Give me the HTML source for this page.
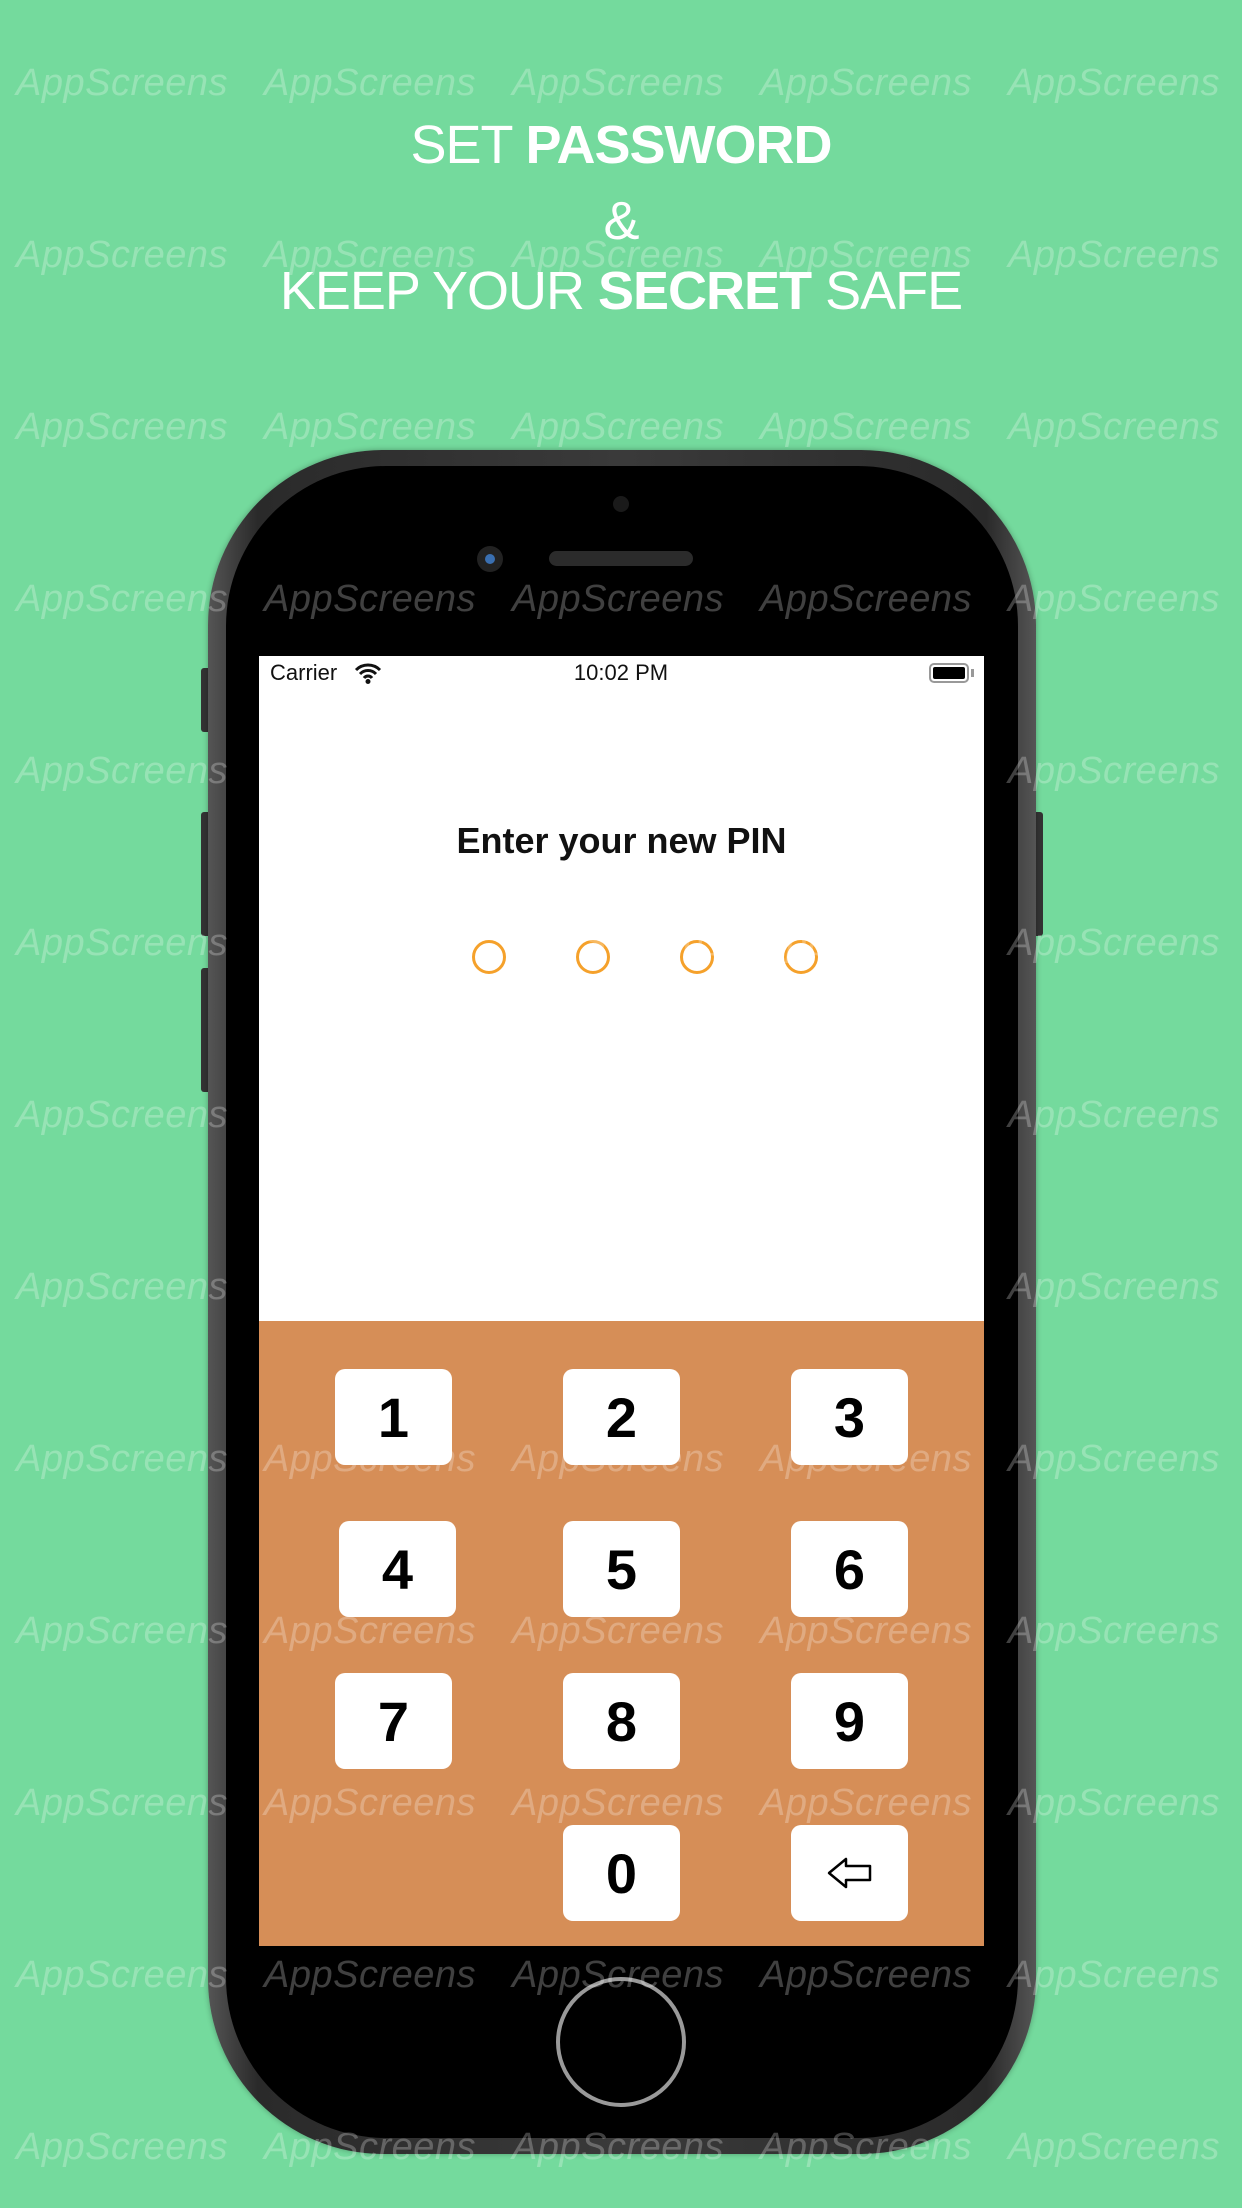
<!DOCTYPE html>
<html><head><meta charset="utf-8"><style>
*{margin:0;padding:0;box-sizing:border-box}
body{width:1242px;height:2208px;background:#74DA9D;position:relative;overflow:hidden;font-family:"Liberation Sans",sans-serif}
.t{position:absolute;left:0;width:1242px;text-align:center;color:#fff;font-size:54px;letter-spacing:-1px}
.t b{font-weight:bold}
.wm{position:absolute;color:rgba(255,255,255,0.25);font-size:38px;font-style:italic;font-family:"Liberation Sans",sans-serif;white-space:nowrap;z-index:5;letter-spacing:0.5px}
.abs{position:absolute}
.btn{position:absolute;width:117px;height:96px;background:#fff;border-radius:10px;z-index:6;display:flex;align-items:center;justify-content:center;font-weight:bold;font-size:56px;color:#000}
.dot{position:absolute;width:34px;height:34px;border:3px solid #F5A12B;border-radius:50%}
</style></head><body>
<div class="t" style="top:114px">SET <b>PASSWORD</b></div>
<div class="t" style="top:190px">&amp;</div>
<div class="t" style="top:260px">KEEP YOUR <b>SECRET</b> SAFE</div>

<div class="abs" style="left:201px;top:668px;width:10px;height:64px;background:#333;border-radius:3px"></div>
<div class="abs" style="left:201px;top:812px;width:10px;height:124px;background:#333;border-radius:3px"></div>
<div class="abs" style="left:201px;top:968px;width:10px;height:124px;background:#333;border-radius:3px"></div>
<div class="abs" style="left:1033px;top:812px;width:10px;height:124px;background:#333;border-radius:3px"></div>
<div class="abs" style="left:208px;top:450px;width:828px;height:1704px;border-radius:175px;background:linear-gradient(90deg,#555,#2a2a2a 6%,#3a3a3a 50%,#2a2a2a 94%,#555);box-shadow:0 0 6px rgba(0,0,0,.3)"></div>
<div class="abs" style="left:226px;top:466px;width:792px;height:1672px;border-radius:160px;background:#000"></div>
<div class="abs" style="left:613px;top:496px;width:16px;height:16px;border-radius:50%;background:#1a1a1a"></div>
<div class="abs" style="left:477px;top:546px;width:26px;height:26px;border-radius:50%;background:#222"><div class="abs" style="left:8px;top:8px;width:10px;height:10px;border-radius:50%;background:#3a6fb0"></div></div>
<div class="abs" style="left:549px;top:551px;width:144px;height:15px;border-radius:8px;background:#2b2b2b"></div>
<div class="abs" style="left:556px;top:1977px;width:130px;height:130px;border-radius:50%;border:4px solid #999;background:#000"></div>
<div class="abs" style="left:259px;top:656px;width:725px;height:665px;background:#fff"></div>
<div class="abs" style="left:259px;top:1321px;width:725px;height:625px;background:#D68E57"></div>
<div class="abs" style="left:270px;top:660px;font-size:22px;color:#111">Carrier</div>
<svg class="abs" style="left:354px;top:662px" width="28" height="22" viewBox="0 0 28 22"><path d="M2 8a17 17 0 0 1 24 0M6 12a11 11 0 0 1 16 0M10 16a5 5 0 0 1 8 0" stroke="#111" stroke-width="3" fill="none"/><circle cx="14" cy="19.5" r="2.5" fill="#111"/></svg>
<div class="abs" style="left:521px;top:660px;width:200px;text-align:center;font-size:22px;color:#111">10:02 PM</div>
<div class="abs" style="left:929px;top:663px;width:40px;height:20px;border:2px solid #999;border-radius:5px;padding:2px"><div style="width:100%;height:100%;background:#000;border-radius:2px"></div></div>
<div class="abs" style="left:971px;top:669px;width:3px;height:8px;background:#999"></div>
<div class="abs" style="left:259px;top:820px;width:725px;text-align:center;font-size:36px;font-weight:bold;color:#111">Enter your new PIN</div>
<div class="dot" style="left:472px;top:940px"></div>
<div class="dot" style="left:576px;top:940px"></div>
<div class="dot" style="left:680px;top:940px"></div>
<div class="dot" style="left:784px;top:940px"></div>

<div class="btn" style="left:335px;top:1369px">1</div>
<div class="btn" style="left:563px;top:1369px">2</div>
<div class="btn" style="left:791px;top:1369px">3</div>
<div class="btn" style="left:339px;top:1521px">4</div>
<div class="btn" style="left:563px;top:1521px">5</div>
<div class="btn" style="left:791px;top:1521px">6</div>
<div class="btn" style="left:335px;top:1673px">7</div>
<div class="btn" style="left:563px;top:1673px">8</div>
<div class="btn" style="left:791px;top:1673px">9</div>
<div class="btn" style="left:563px;top:1825px">0</div>
<div class="btn" style="left:791px;top:1825px"><svg width="48" height="36" viewBox="0 0 48 36"><path d="M3 18L20 4V11H44V25H20V32Z" fill="none" stroke="#000" stroke-width="2.5" stroke-linejoin="round"/></svg></div>

<div id="w"></div>
<script>
var s='';for(var r=0;r<13;r++)for(var c=0;c<5;c++){s+='<div class="wm" style="left:'+(16+c*248)+'px;top:'+(62+r*172)+'px">AppScreens</div>';}
document.getElementById('w').innerHTML=s;
</script>
</body></html>
